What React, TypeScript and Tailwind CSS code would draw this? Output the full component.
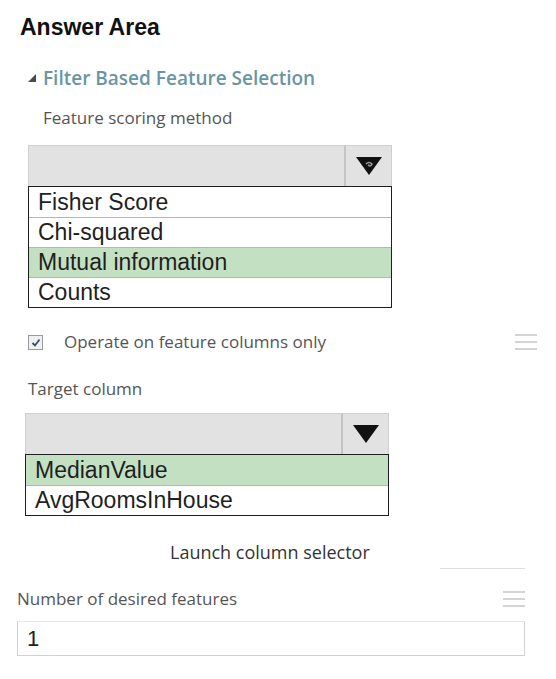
import { ReactNode } from 'react'

const sans = { fontFamily: '"Liberation Sans", Arial, sans-serif' }
const segoe = { fontFamily: '"Open Sans", "Noto Sans", sans-serif' }

const Arrow = ({ curl }: { curl?: boolean }) => (
  <svg width="28" height="20" viewBox="0 0 28 20">
    <polygon points="1,1 27,1 14,19" fill="#111" />
    {curl && <path d="M11 8 q3 -3 6 0 q-1 3 -4 1" stroke="#9a9a9a" strokeWidth="1.6" fill="none" />}
  </svg>
)

const Hamburger = () => (
  <div className="flex flex-col gap-[5px] w-[22px]">
    <div className="h-[2px] bg-[#d4d4d4]" />
    <div className="h-[2px] bg-[#d4d4d4]" />
    <div className="h-[2px] bg-[#d4d4d4]" />
  </div>
)

type Option = { label: string; selected?: boolean }

const Dropdown = ({ options, curl, className }: { options: Option[]; curl?: boolean; className: string }) => (
  <div className={className} style={sans}>
    <div className="flex h-[41px] bg-[#e2e2e2] border border-[#cfcfcf] border-b-0">
      <div className="flex-1" />
      <div className="w-[47px] border-l-2 border-[#c4c4c4] flex items-center justify-center">
        <Arrow curl={curl} />
      </div>
    </div>
    <div className="border-[1.5px] border-[#1e1e1e]">
      {options.map((o, i) => (
        <div
          key={o.label}
          className={`h-[30px] flex items-center pl-[9px] text-[23px] leading-none text-[#1f1f1f] ${
            o.selected ? 'bg-[#c4e0c2]' : 'bg-white'
          } ${i > 0 ? 'border-t border-[#b5b5b5]' : ''}`}
        >
          {o.label}
        </div>
      ))}
    </div>
  </div>
)

const Label = ({ children, className }: { children: ReactNode; className: string }) => (
  <div className={`text-[17px] text-[#555] ${className}`} style={segoe}>
    {children}
  </div>
)

export default function App() {
  return (
    <div className="w-[556px] h-[679px] bg-white relative overflow-hidden">
      <div className="pt-[12px] pl-[20px] h-[42px]">
        <h2 className="text-[23px] leading-[30px] font-bold text-[#111]" style={sans}>
          Answer Area
        </h2>
      </div>

      <div className="flex items-center h-[24px] mt-[24px] pl-[28px] gap-[7px]">
        <svg width="8" height="8" viewBox="0 0 8 8">
          <polygon points="8,0 8,8 0,8" fill="#4a4a4a" />
        </svg>
        <span className="text-[19px] font-semibold text-[#6a95a3]" style={segoe}>
          Filter Based Feature Selection
        </span>
      </div>

      <Label className="pl-[43px] mt-[16px] h-[24px] leading-[24px]">Feature scoring method</Label>

      <Dropdown
        className="ml-[28px] mt-[15px] w-[364px]"
        curl
        options={[
          { label: 'Fisher Score' },
          { label: 'Chi-squared' },
          { label: 'Mutual information', selected: true },
          { label: 'Counts' },
        ]}
      />

      <div className="flex items-center h-[24px] mt-[22px] pl-[28px] pr-[19px]">
        <div className="w-[15px] h-[15px] border border-[#9a9a9a] bg-[#eef0f6] flex items-center justify-center">
          <svg width="10" height="9" viewBox="0 0 10 9">
            <path d="M1.5 5 L4 7.5 L8.5 1.5" stroke="#3c4a63" strokeWidth="1.8" fill="none" />
          </svg>
        </div>
        <span className="ml-[21px] text-[17px] text-[#555] flex-1" style={segoe}>
          Operate on feature columns only
        </span>
        <Hamburger />
      </div>

      <Label className="pl-[28px] mt-[23px] h-[24px] leading-[24px]">Target column</Label>

      <Dropdown
        className="ml-[25px] mt-[12px] w-[364px]"
        options={[{ label: 'MedianValue', selected: true }, { label: 'AvgRoomsInHouse' }]}
      />

      <div
        className="mt-[24px] h-[24px] leading-[24px] pl-[170px] text-[18px] font-medium text-[#333]"
        style={segoe}
      >
        Launch column selector
      </div>
      <div className="ml-[440px] w-[85px] h-px bg-[#dedede] mt-[4px]" />

      <div className="flex items-center h-[24px] mt-[18px] pl-[17px] pr-[31px]">
        <span className="flex-1 text-[17px] text-[#555]" style={segoe}>
          Number of desired features
        </span>
        <Hamburger />
      </div>

      <div
        className="ml-[17px] mt-[10px] w-[508px] h-[35px] border border-[#d0d0d0] border-t-[#e6e6e6] flex items-center pl-[9px] text-[22px] text-[#222]"
        style={sans}
      >
        1
      </div>
    </div>
  )
}
